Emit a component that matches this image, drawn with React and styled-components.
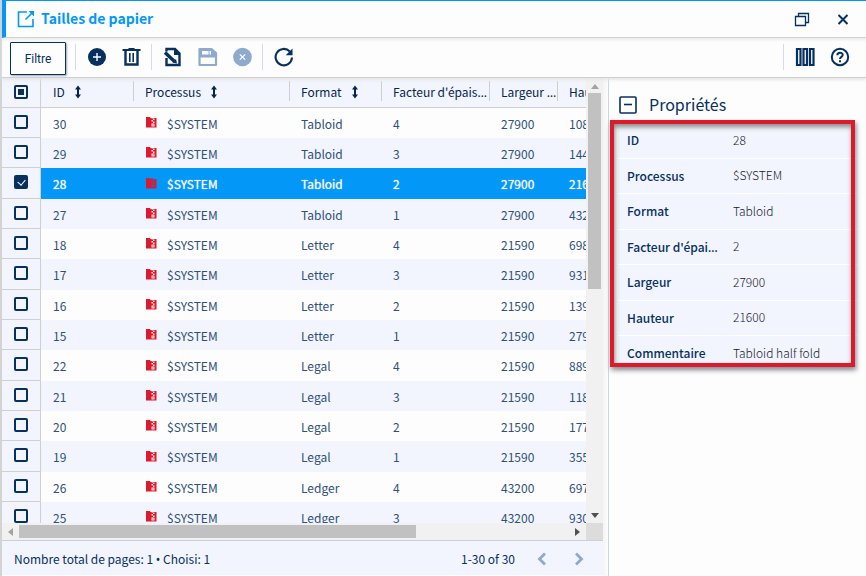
import React, { useState } from 'react';
import styled, { createGlobalStyle, css } from 'styled-components';

const navy = '#07305f';
const blue = '#0398f8';
const pale = '#f2f5fd';
const line = '#cfcfcf';
const sans = '"Noto Sans CJK SC", "Noto Sans", sans-serif';
const punctuation = '"Noto Sans", sans-serif';

const Global = createGlobalStyle`
  * { box-sizing: border-box; }
  html, body, #root { height: 100%; }
  body {
    margin: 0;
    overflow: hidden;
    background: #fdfdfd;
    color: ${navy};
    font: 12px/20px ${sans};
  }
  button { font: inherit; color: inherit; }
`;

const Window = styled.div`
  height: 100%;
  display: flex;
  flex-direction: column;
  border-left: 2px solid #d3d3d3;
`;

const TitleBar = styled.header`
  flex: none;
  display: flex;
  align-items: center;
  height: 38px;
  padding: 0 13px 0 11px;
  border-top: 1px solid ${blue};
  border-left: 4px solid ${blue};
  border-bottom: 1px solid ${line};
`;

const Title = styled.h1`
  flex: 1;
  margin: 0 0 0 6px;
  padding-bottom: 2px;
  color: ${blue};
  font-size: 14px;
  line-height: 20px;
  font-weight: 700;
`;

const IconButton = styled.button`
  display: flex;
  align-items: center;
  justify-content: center;
  flex: none;
  width: 20px;
  height: 20px;
  padding: 0;
  border: 0;
  background: none;
  color: ${navy};
  &:disabled { color: #8eabcd; }
`;

const WindowActions = styled.div`
  display: flex;
  gap: 21px;
`;

const Toolbar = styled.div`
  flex: none;
  display: flex;
  align-items: center;
  height: 40px;
  padding: 0 16px 2px 8px;
  border-bottom: 1px solid ${line};
  box-shadow: inset 0 3px 3px -1px #ececec, 0 2px 3px #e6e6e6;
  position: relative;
`;

const FilterButton = styled.button`
  width: 56px;
  height: 33px;
  margin-top: 4px;
  padding: 0;
  border: 1px solid ${navy};
  border-radius: 1px;
  background: #fdfdfd;
  font-family: Roboto, sans-serif;
  font-size: 12px;
  box-shadow: 1px 1px 2px #9fa9b8;
`;

const Group = styled.div`
  display: flex;
  gap: 15px;
`;

const Separator = styled.div`
  width: 1px;
  height: 26px;
  margin: 0 11px 0 9px;
  background: #d5dae3;
`;

const Spacer = styled.div`
  flex: 1;
`;

const Content = styled.main`
  flex: 1;
  min-height: 0;
  display: flex;
`;

const ListPane = styled.section`
  flex: 1;
  min-width: 0;
  display: flex;
  flex-direction: column;
`;

const ListArea = styled.div`
  flex: 1;
  min-height: 0;
  display: flex;
`;

const Viewport = styled.div`
  flex: 1;
  min-width: 0;
  overflow: hidden;
`;

const Grid = styled.table`
  width: 780px;
  table-layout: fixed;
  border-collapse: separate;
  border-spacing: 0;
`;

const Col = styled.col`
  width: ${p => p.$w}px;
`;

const HeadRow = styled.tr`
  height: 30px;
  background: ${pale};
`;

const HeadCell = styled.th`
  padding: 0 0 1px 12px;
  border-bottom: 1px solid ${line};
  text-align: left;
  font-family: ${punctuation};
  font-weight: 400;
  color: #04264f;
  white-space: nowrap;
  overflow: hidden;
  text-overflow: ellipsis;
  background: ${p => (p.$first ? 'none' : `linear-gradient(${line}, ${line}) 0 3px / 1px 20px no-repeat`)};
`;

const Label = styled.span`
  font-family: ${sans};
`;

const Bullet = styled.span`
  font-family: ${punctuation};
`;

const HeadLabel = styled(Label)`
  display: inline-flex;
  align-items: center;
  gap: 9px;
  vertical-align: middle;
`;

const CheckCell = styled.td`
  padding: 0 0 2px 12px;
  line-height: 0;
  text-align: left;
  background: ${pale};
  border-right: 1px solid ${line};
  border-bottom: 1px solid ${line};
`;

const Row = styled.tr`
  height: 30px;
  background: #fdfdfd;
  color: #2f5078;
  &:nth-child(even) { background: ${pale}; }
  &:nth-child(3n) { height: 31px; }
  ${p => p.$selected && css`
    background: ${blue} !important;
    color: #f2f5fd;
    text-shadow: 0 0 1px #f2f5fd;
  `}
`;

const Cell = styled.td`
  padding: 1px 0 0 12px;
  white-space: nowrap;
`;

const ProcessLabel = styled.span`
  display: flex;
  align-items: center;
  gap: 10px;
  svg { margin-top: -3px; }
`;

const Checkbox = styled.input`
  appearance: none;
  position: relative;
  width: 14px;
  height: 14px;
  margin: 0;
  border: 2px solid ${navy};
  border-radius: 2px;
  &:checked { background: ${navy}; }
  &:checked::after {
    content: "";
    position: absolute;
    left: 3px;
    top: 1px;
    width: 4px;
    height: 6px;
    border: solid #fff;
    border-width: 0 1px 1px 0;
    transform: rotate(40deg);
  }
  &:indeterminate::after {
    content: "";
    position: absolute;
    inset: 2px;
    background: ${navy};
  }
`;

const VScroll = styled.div`
  flex: none;
  width: 17px;
  display: flex;
  flex-direction: column;
  align-items: center;
  background: #f1f1f1;
  padding: 6px 0 5px;
  gap: 4px;
`;

const HScroll = styled.div`
  flex: none;
  display: flex;
  align-items: center;
  height: 17px;
  padding-left: 6px;
  background: #f1f1f1;
`;

const Track = styled.div`
  flex: 1;
  min-width: 0;
  min-height: 0;
`;

const VThumb = styled.div`
  width: 13px;
  height: 47%;
  background: #c1c1c1;
`;

const HThumb = styled.div`
  width: 72%;
  height: 13px;
  background: #c1c1c1;
`;

const HTrack = styled(Track)`
  margin: 0 4px 0 6px;
`;

const Corner = styled.div`
  width: 17px;
  height: 17px;
  margin-left: 6px;
  background: #dcdcdc;
`;

const Footer = styled.footer`
  flex: none;
  display: flex;
  align-items: center;
  height: 36px;
  padding: 2px 14px 0 12px;
  border-top: 1px solid ${line};
  border-bottom: 1px solid #fdfdfd;
  background: ${pale};
`;

const Pager = styled.div`
  display: flex;
  align-items: center;
  gap: 17px;
`;

const Splitter = styled.div`
  flex: none;
  width: 6px;
  border-right: 1px solid #cdd5e3;
  background: linear-gradient(90deg, #f4f4f6, #fdfdfd);
`;

const DetailPane = styled.aside`
  flex: none;
  width: 257px;
  padding: 16px 8px 0 9px;
`;

const DetailHead = styled.div`
  display: flex;
  align-items: center;
  gap: 11px;
  height: 22px;
`;

const DetailTitle = styled.h2`
  margin: 0;
  padding-bottom: 2px;
  font-size: 16px;
  line-height: 22px;
  font-weight: 400;
`;

const Framed = styled.div`
  position: relative;
  margin-top: 7px;
`;

const Frame = styled.div`
  position: absolute;
  inset: -3px 3px 5px -8px;
  border: 4px solid #dc1a2e;
  box-shadow: 1px 3px 5px #888, inset 1px 3px 5px #888;
  pointer-events: none;
`;

const Properties = styled.table`
  width: 100%;
  table-layout: fixed;
  border-collapse: separate;
  border-spacing: 0;
`;

const PropRow = styled.tr`
  height: 36px;
  &:nth-child(even) { height: 35px; }
`;

const propCell = css`
  padding: 0 6px 0 9px;
  border-bottom: 1px solid #fff;
  background: ${pale};
  text-align: left;
  white-space: nowrap;
  overflow: hidden;
  text-overflow: ellipsis;
`;

const PropName = styled.th`
  ${propCell}
  width: 106px;
  font-family: ${punctuation};
  font-weight: 500;
`;

const PropValue = styled.td`
  ${propCell}
  padding-bottom: 2px;
  color: #15202e;
  font-weight: 300;
`;

const Svg = ({ s = 20, w, h, children }) => (
  <svg width={w || s} height={h || s} viewBox={`0 0 ${w || s} ${h || s}`} fill="none" stroke="currentColor" aria-hidden="true">
    {children}
  </svg>
);

const OpenIcon = () => (
  <Svg s={18}>
    <path d="M10 2H1.5V16.5H16V9" stroke="#0398f8" strokeWidth="1.6" />
    <path d="M8.500 9.500L15 3" stroke="#0398f8" strokeWidth="1.6" />
    <path d="M11.500 1H17V6.500Z" fill="#0398f8" stroke="none" />
  </Svg>
);
const RestoreIcon = () => (
  <Svg>
    <path d="M3.500 7.500H13.500V16.500H3.500Z" strokeWidth="1.3" />
    <path d="M6.500 7V4.500H16.500V13.500H14" strokeWidth="1.3" />
  </Svg>
);
const CloseIcon = () => <Svg><path d="M5.500 6L14.500 15M14.500 6L5.500 15" strokeWidth="2" /></Svg>;
const AddIcon = () => (
  <Svg>
    <circle cx="10" cy="10" r="9" fill="currentColor" stroke="none" />
    <path d="M10 6V14M6 10H14" stroke="#fff" strokeWidth="1.4" />
  </Svg>
);
const TrashIcon = () => (
  <Svg>
    <path d="M0.500 3H18.500M6.500 2H12.500" strokeWidth="2.200" />
    <path d="M3.500 4V17.500H15.500V4" strokeWidth="2.400" />
    <path d="M7.800 6V15M11.200 6V15" strokeWidth="1.600" />
  </Svg>
);
const EditIcon = () => (
  <Svg>
    <path d="M3.500 4.500V2H12L16.500 6.500V18H3.500V11" strokeWidth="2.400" />
    <path d="M11 1V8H17.500Z" fill="currentColor" stroke="none" />
    <path d="M2 5.500L11.500 14.500" strokeWidth="3.400" />
    <path d="M9.500 15.500L14 16.500L13 12Z" fill="currentColor" stroke="none" />
  </Svg>
);
const SaveIcon = () => (
  <Svg>
    <path d="M1.500 2H13.500L18 6V18H1.500Z" strokeWidth="2.200" strokeLinejoin="round" />
    <path d="M2 2H13.500L18 6V10.500H2Z" fill="currentColor" stroke="none" />
    <path d="M4 4H10.500V7.500H4Z" fill="#fdfdfd" stroke="none" />
    <path d="M11.500 4H13V7.500H11.500Z" fill="#fdfdfd" stroke="none" />
  </Svg>
);
const CancelIcon = () => (
  <Svg>
    <circle cx="9.500" cy="10" r="9.300" fill="currentColor" stroke="none" />
    <path d="M6.800 7.300L12.200 12.700M12.200 7.300L6.800 12.700" stroke="#fff" strokeWidth="1.200" />
  </Svg>
);
const RefreshIcon = () => (
  <Svg>
    <path d="M15.800 4.500A8.200 8.200 0 1 0 18 10.500" strokeWidth="2.100" />
    <path d="M18.500 1.500V8.300H11.700Z" fill="currentColor" stroke="none" />
  </Svg>
);
const ColumnsIcon = () => (
  <Svg>
    <path d="M2 2H5.500V18H2ZM8.500 2H12V18H8.500ZM15 2H18.500V18H15Z" strokeWidth="2.200" />
  </Svg>
);
const HelpIcon = () => (
  <Svg>
    <circle cx="10" cy="10" r="8.200" strokeWidth="2" />
    <path d="M7.300 8.200C7.300 4.800 12.700 4.900 12.700 8C12.700 9.800 10 9.900 10 12" strokeWidth="2" />
    <path d="M10 13.200V15.200" strokeWidth="2" />
  </Svg>
);
const SortIcon = () => (
  <Svg w={8} h={14}>
    <path d="M4 3V11" strokeWidth="2" />
    <path d="M1 4.500L4 0.500L7 4.500ZM1 9.500L4 13.500L7 9.500Z" fill="currentColor" stroke="none" />
  </Svg>
);
const ProcessIcon = () => (
  <Svg w={12} h={12}>
    <path d="M1 1H5L5.500 2H11.500V11.500H1Z" fill="#dc1a2e" stroke="none" />
    <path d="M6.500 1H8V2.500H6.500ZM8 2.500H9.500V4H8ZM6.500 4H8V5.500H6.500ZM8 5.500H9.500V7H8ZM6.500 7.500H9.500V10.500H6.500Z" fill="#fff" fillOpacity={0.9} stroke="none" />
    <path d="M7.500 8.500H8.500V9.500H7.500Z" fill="#dc1a2e" stroke="none" />
  </Svg>
);
const SelectedProcessIcon = () => (
  <Svg w={12} h={12}>
    <path d="M1 1H5L5.500 2H11.500V11.500H1Z" fill="#dc1a2e" stroke="none" />
    <path d="M6 1H8V2.500H6ZM8 2.500H9.500V4H8ZM6.500 4H8V5.500H6.500ZM8 5.500H9.500V7H8ZM6.500 7.500H9.500V10H6.500Z" fill="#4a5a9d" stroke="none" />
  </Svg>
);
const CollapseIcon = () => (
  <Svg s={18}>
    <rect x="1" y="1" width="16" height="16" rx="1" strokeWidth="1.600" />
    <path d="M5 8.500H13" strokeWidth="1.600" />
  </Svg>
);
const Chevron = ({ d }) => <Svg><path d={d} stroke="#8eabcd" strokeWidth="2.800" /></Svg>;
const Arrow = ({ d, w, h, color }) => <Svg w={w} h={h}><path d={d} fill={color} stroke="none" /></Svg>;

const columns = [
  ['ID', true], ['Processus', true], ['Format', true],
  ["Facteur d'épaisseur", false], ['Largeur du papier', false], ['Hauteur', false],
];

const rows = [
  [30, 'Tabloid', 4, 27900, 10800], [29, 'Tabloid', 3, 27900, 14400],
  [28, 'Tabloid', 2, 27900, 21600], [27, 'Tabloid', 1, 27900, 43200],
  [18, 'Letter', 4, 21590, 6985], [17, 'Letter', 3, 21590, 9313],
  [16, 'Letter', 2, 21590, 13970], [15, 'Letter', 1, 21590, 27940],
  [22, 'Legal', 4, 21590, 8890], [21, 'Legal', 3, 21590, 11853],
  [20, 'Legal', 2, 21590, 17780], [19, 'Legal', 1, 21590, 35560],
  [26, 'Ledger', 4, 43200, 6975], [25, 'Ledger', 3, 43200, 9300],
];

const properties = [
  ['ID', '28'], ['Processus', '$SYSTEM'], ['Format', 'Tabloid'],
  ["Facteur d'épaisseur", '2'], ['Largeur', '27900'], ['Hauteur', '21600'],
  ['Commentaire', 'Tabloid half fold'],
];

export default function App() {
  const [selected, setSelected] = useState([28]);
  const toggle = id =>
    setSelected(list => (list.includes(id) ? list.filter(x => x !== id) : [...list, id]));

  return (
    <Window>
      <Global />
      <TitleBar>
        <OpenIcon />
        <Title>Tailles de papier</Title>
        <WindowActions>
          <IconButton aria-label="Restaurer"><RestoreIcon /></IconButton>
          <IconButton aria-label="Fermer"><CloseIcon /></IconButton>
        </WindowActions>
      </TitleBar>

      <Toolbar>
        <FilterButton>Filtre</FilterButton>
        <Separator />
        <Group>
          <IconButton aria-label="Ajouter"><AddIcon /></IconButton>
          <IconButton aria-label="Supprimer"><TrashIcon /></IconButton>
        </Group>
        <Separator />
        <Group>
          <IconButton aria-label="Modifier"><EditIcon /></IconButton>
          <IconButton aria-label="Enregistrer" disabled><SaveIcon /></IconButton>
          <IconButton aria-label="Annuler" disabled><CancelIcon /></IconButton>
        </Group>
        <Separator />
        <IconButton aria-label="Actualiser"><RefreshIcon /></IconButton>
        <Spacer />
        <Separator />
        <Group>
          <IconButton aria-label="Colonnes"><ColumnsIcon /></IconButton>
          <IconButton aria-label="Aide"><HelpIcon /></IconButton>
        </Group>
      </Toolbar>

      <Content>
        <ListPane>
          <ListArea>
            <Viewport>
              <Grid>
                <colgroup>
                  <Col $w={39} /><Col $w={92} /><Col $w={156} /><Col $w={92} />
                  <Col $w={108} /><Col $w={68} /><Col $w={225} />
                </colgroup>
                <thead>
                  <HeadRow>
                    <CheckCell as="th">
                      <Checkbox
                        type="checkbox"
                        aria-label="Tout sélectionner"
                        ref={el => { if (el) el.indeterminate = selected.length > 0; }}
                      />
                    </CheckCell>
                    {columns.map(([name, sortable], i) => (
                      <HeadCell key={name} $first={i === 0}>
                        {sortable ? <HeadLabel>{name}<SortIcon /></HeadLabel> : <Label>{name}</Label>}
                      </HeadCell>
                    ))}
                  </HeadRow>
                </thead>
                <tbody>
                  {rows.map(([id, format, factor, width, height]) => {
                    const on = selected.includes(id);
                    return (
                      <Row key={id} $selected={on}>
                        <CheckCell>
                          <Checkbox
                            type="checkbox"
                            aria-label={`Sélectionner ${id}`}
                            checked={on}
                            onChange={() => toggle(id)}
                          />
                        </CheckCell>
                        <Cell>{id}</Cell>
                        <Cell>
                          <ProcessLabel>
                            {on ? <SelectedProcessIcon /> : <ProcessIcon />}
                            $SYSTEM
                          </ProcessLabel>
                        </Cell>
                        <Cell>{format}</Cell>
                        <Cell>{factor}</Cell>
                        <Cell>{width}</Cell>
                        <Cell>{height}</Cell>
                      </Row>
                    );
                  })}
                </tbody>
              </Grid>
            </Viewport>
            <VScroll>
              <Arrow w={8} h={5} d="M0 5L4 0L8 5Z" color="#a3a3a3" />
              <Track><VThumb /></Track>
              <Arrow w={8} h={5} d="M0 0L4 5L8 0Z" color="#505050" />
            </VScroll>
          </ListArea>
          <HScroll>
            <Arrow w={5} h={8} d="M5 0L0 4L5 8Z" color="#a3a3a3" />
            <HTrack><HThumb /></HTrack>
            <Arrow w={5} h={8} d="M0 0L5 4L0 8Z" color="#505050" />
            <Corner />
          </HScroll>
          <Footer>
            <span>Nombre total de pages: 1 <Bullet>•</Bullet> Choisi: 1</span>
            <Spacer />
            <Pager>
              <span>1-30 of 30</span>
              <IconButton aria-label="Page précédente"><Chevron d="M13 4.500L7.500 10L13 15.500" /></IconButton>
              <IconButton aria-label="Page suivante"><Chevron d="M7 4.500L12.500 10L7 15.500" /></IconButton>
            </Pager>
          </Footer>
        </ListPane>
        <Splitter />
        <DetailPane>
          <DetailHead>
            <IconButton aria-label="Réduire"><CollapseIcon /></IconButton>
            <DetailTitle>Propriétés</DetailTitle>
          </DetailHead>
          <Framed>
            <Properties>
              <tbody>
                {properties.map(([name, value]) => (
                  <PropRow key={name}>
                    <PropName scope="row"><Label>{name}</Label></PropName>
                    <PropValue>{value}</PropValue>
                  </PropRow>
                ))}
              </tbody>
            </Properties>
            <Frame />
          </Framed>
        </DetailPane>
      </Content>
    </Window>
  );
}
